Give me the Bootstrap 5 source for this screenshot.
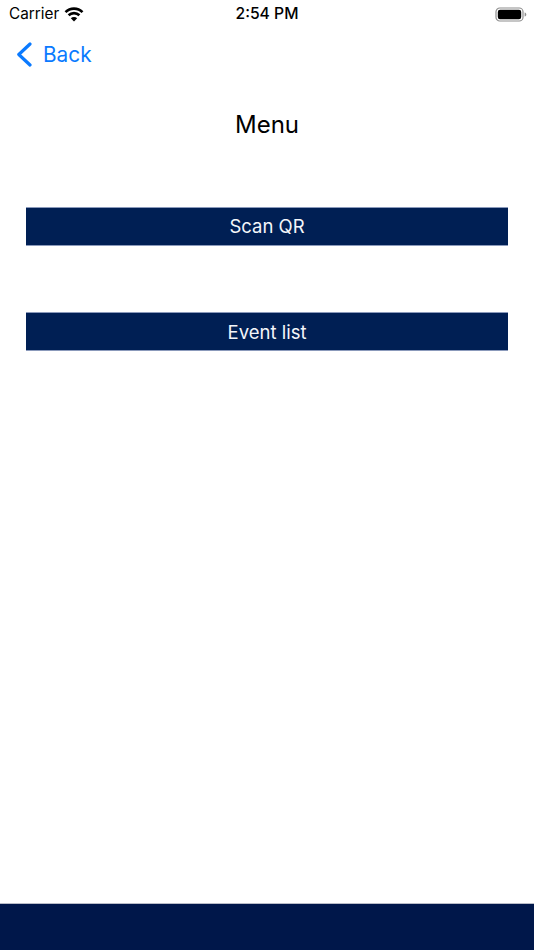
<!DOCTYPE html>
<html lang="en">
<head>
<meta charset="utf-8">
<title>Menu</title>
<link href="https://cdn.jsdelivr.net/npm/bootstrap@5.3.0/dist/css/bootstrap.min.css" rel="stylesheet">
<style>
html,body{height:100%;}
body{font-family:Inter,"Liberation Sans",sans-serif;color:#000;background:#fff;}
.app-screen{height:950px;width:534px;overflow:hidden;}
.status-row{height:28px;padding:0 7px 0 9px;font-size:15.3px;line-height:28px;}
.status-left{width:118px;gap:5px;}
.status-right{width:120px;}
.status-time{font-weight:500;font-size:15.7px;}
.back-row{height:52px;padding-left:16px;color:#0a7aff;font-size:20.8px;gap:11px;text-decoration:none;}
.back-row:hover{color:#0a7aff;}
.back-label{padding-top:2px;}
.menu-title{font-size:24px;line-height:30px;margin:30px 0 66.5px;font-weight:400;text-align:center;}
.menu-btn{height:39px;width:482px;background:#001f54;border:0;border-top:1px solid #8b9abb;border-bottom:1px solid #8b9abb;border-radius:0;color:#f4f6fa;font-size:18.5px;line-height:36px;padding:0;text-align:center;}
.menu-btn:hover,.menu-btn:active{background:#001f54!important;color:#f4f6fa!important;}
.menu-list{gap:66.6px;}
.foot-bar{height:47px;background:#00174a;border-top:1px solid #b9bcc8;}
</style>
</head>
<body>
<div class="app-screen d-flex flex-column">
  <div class="status-row d-flex align-items-center justify-content-between">
    <div class="status-left d-flex align-items-center">
      <span>Carrier</span>
      <svg width="20" height="15" viewBox="0 0 20 15"><path d="M1.5 5.2A12 12 0 0 1 18.5 5.2M4.6 8.3A7.7 7.7 0 0 1 15.4 8.3" fill="none" stroke="#000" stroke-width="2.6"/><path d="M10 14.6 6.8 11.2A4.6 4.6 0 0 1 13.2 11.2Z" fill="#000"/></svg>
    </div>
    <div class="status-time">2:54 PM</div>
    <div class="status-right d-flex justify-content-end align-items-center">
      <svg width="32" height="15" viewBox="0 0 32 15"><rect x="1" y="1" width="27" height="13" rx="3.8" fill="none" stroke="#8e8e8e" stroke-width="1.2"/><rect x="2.8" y="2.8" width="23.4" height="9.4" rx="2.2" fill="#000"/><path d="M29.6 5.4c1.2.3 1.7 1.1 1.7 2.1s-.5 1.8-1.7 2.1z" fill="#8e8e8e"/></svg>
    </div>
  </div>
  <a class="back-row d-flex align-items-center" href="#">
    <svg width="16" height="26" viewBox="0 0 16 26"><path d="M14 3 2.8 13.5 14 24" fill="none" stroke="#0a7aff" stroke-width="3.2" stroke-linecap="round" stroke-linejoin="round"/></svg>
    <span class="back-label">Back</span>
  </a>
  <h1 class="menu-title">Menu</h1>
  <div class="menu-list d-flex flex-column align-items-center">
    <button type="button" class="btn menu-btn">Scan QR</button>
    <button type="button" class="btn menu-btn">Event list</button>
  </div>
  <div class="foot-bar mt-auto"></div>
</div>
<script src="https://cdn.jsdelivr.net/npm/bootstrap@5.3.0/dist/js/bootstrap.bundle.min.js"></script>
</body>
</html>
